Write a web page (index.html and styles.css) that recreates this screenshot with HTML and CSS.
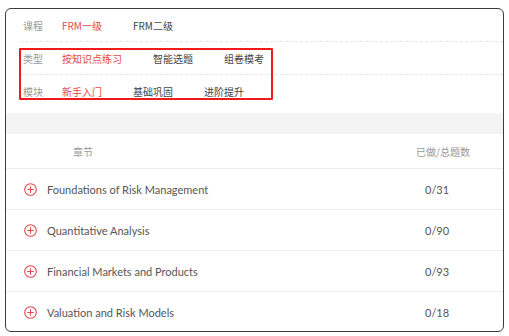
FILE: index.html
```html
<!DOCTYPE html>
<html lang="zh-CN">
<head>
  <meta charset="UTF-8">
  <title>章节练习</title>
  <link rel="stylesheet" href="styles.css">
</head>
<body>
  <div class="panel">
    <div class="filters">
      <div class="filter">
        <span class="label">课程</span>
        <a class="opt active">FRM一级</a>
        <a class="opt">FRM二级</a>
      </div>
      <div class="filter">
        <span class="label">类型</span>
        <a class="opt active">按知识点练习</a>
        <a class="opt">智能选题</a>
        <a class="opt">组卷模考</a>
      </div>
      <div class="filter last">
        <span class="label">模块</span>
        <a class="opt active">新手入门</a>
        <a class="opt">基础巩固</a>
        <a class="opt">进阶提升</a>
      </div>
      <div class="mark"></div>
    </div>
    <div class="band"></div>
    <div class="table">
      <div class="thead">
        <span class="col-name">章节</span>
        <span class="col-num">已做/总题数</span>
      </div>
      <div class="row">
        <span class="col-name"><i class="plus"><svg viewBox="0 0 13 13" width="13" height="13"><circle cx="6.5" cy="6.5" r="5.8"/><path d="M6.5 3.3v6.4M3.3 6.5h6.4"/></svg></i>Foundations of Risk Management</span>
        <span class="col-num">0/31</span>
      </div>
      <div class="row">
        <span class="col-name"><i class="plus"><svg viewBox="0 0 13 13" width="13" height="13"><circle cx="6.5" cy="6.5" r="5.8"/><path d="M6.5 3.3v6.4M3.3 6.5h6.4"/></svg></i>Quantitative Analysis</span>
        <span class="col-num">0/90</span>
      </div>
      <div class="row">
        <span class="col-name"><i class="plus"><svg viewBox="0 0 13 13" width="13" height="13"><circle cx="6.5" cy="6.5" r="5.8"/><path d="M6.5 3.3v6.4M3.3 6.5h6.4"/></svg></i>Financial Markets and Products</span>
        <span class="col-num">0/93</span>
      </div>
      <div class="row">
        <span class="col-name"><i class="plus"><svg viewBox="0 0 13 13" width="13" height="13"><circle cx="6.5" cy="6.5" r="5.8"/><path d="M6.5 3.3v6.4M3.3 6.5h6.4"/></svg></i>Valuation and Risk Models</span>
        <span class="col-num">0/18</span>
      </div>
    </div>
  </div>
</body>
</html>
```

FILE: styles.css
```css
body { margin: 0; background: #fff; font-family: Lato, "Noto Sans CJK SC", sans-serif; }
.panel { position: relative; margin: 8px 0 0 5px; width: 497px; height: 322px; border: 1px solid #3c3c3c; border-radius: 6px; overflow: hidden; }
.filters { position: relative; padding-left: 14px; }
.filter { display: flex; align-items: center; height: 32px; border-bottom: 1px dashed #e6e6e6; font-size: 10px; font-family: "Noto Sans CJK SC", sans-serif; }
.filter.last { border-bottom: none; }
.label { width: 39px; padding-left: 3px; color: #9a9a9a; }
.opt { margin-right: 31px; color: #444; }
.opt.active { color: #e5494b; }
.mark { position: absolute; left: 13px; top: 39px; width: 250px; height: 48px; border: 2px solid #f11a1a; border-radius: 1px; }
.band { margin-top: 6px; height: 21px; background: #f4f4f4; }
.thead, .row { display: flex; align-items: center; border-bottom: 1px solid #ececec; }
.thead { height: 34px; font-size: 10px; font-family: "Noto Sans CJK SC", sans-serif; color: #999; }
.thead .col-name { padding-left: 67px; }
.row { height: 40px; font-size: 11px; color: #555; }
.col-name { flex: 1; display: flex; align-items: center; padding-left: 18px; }
.col-num { width: 78px; }
.thead .col-num { width: 87px; }
.plus { display: inline-block; width: 13px; height: 13px; margin-right: 10px; }
.plus svg { display: block; fill: none; stroke: #e5494b; stroke-width: 1.1; }
```
